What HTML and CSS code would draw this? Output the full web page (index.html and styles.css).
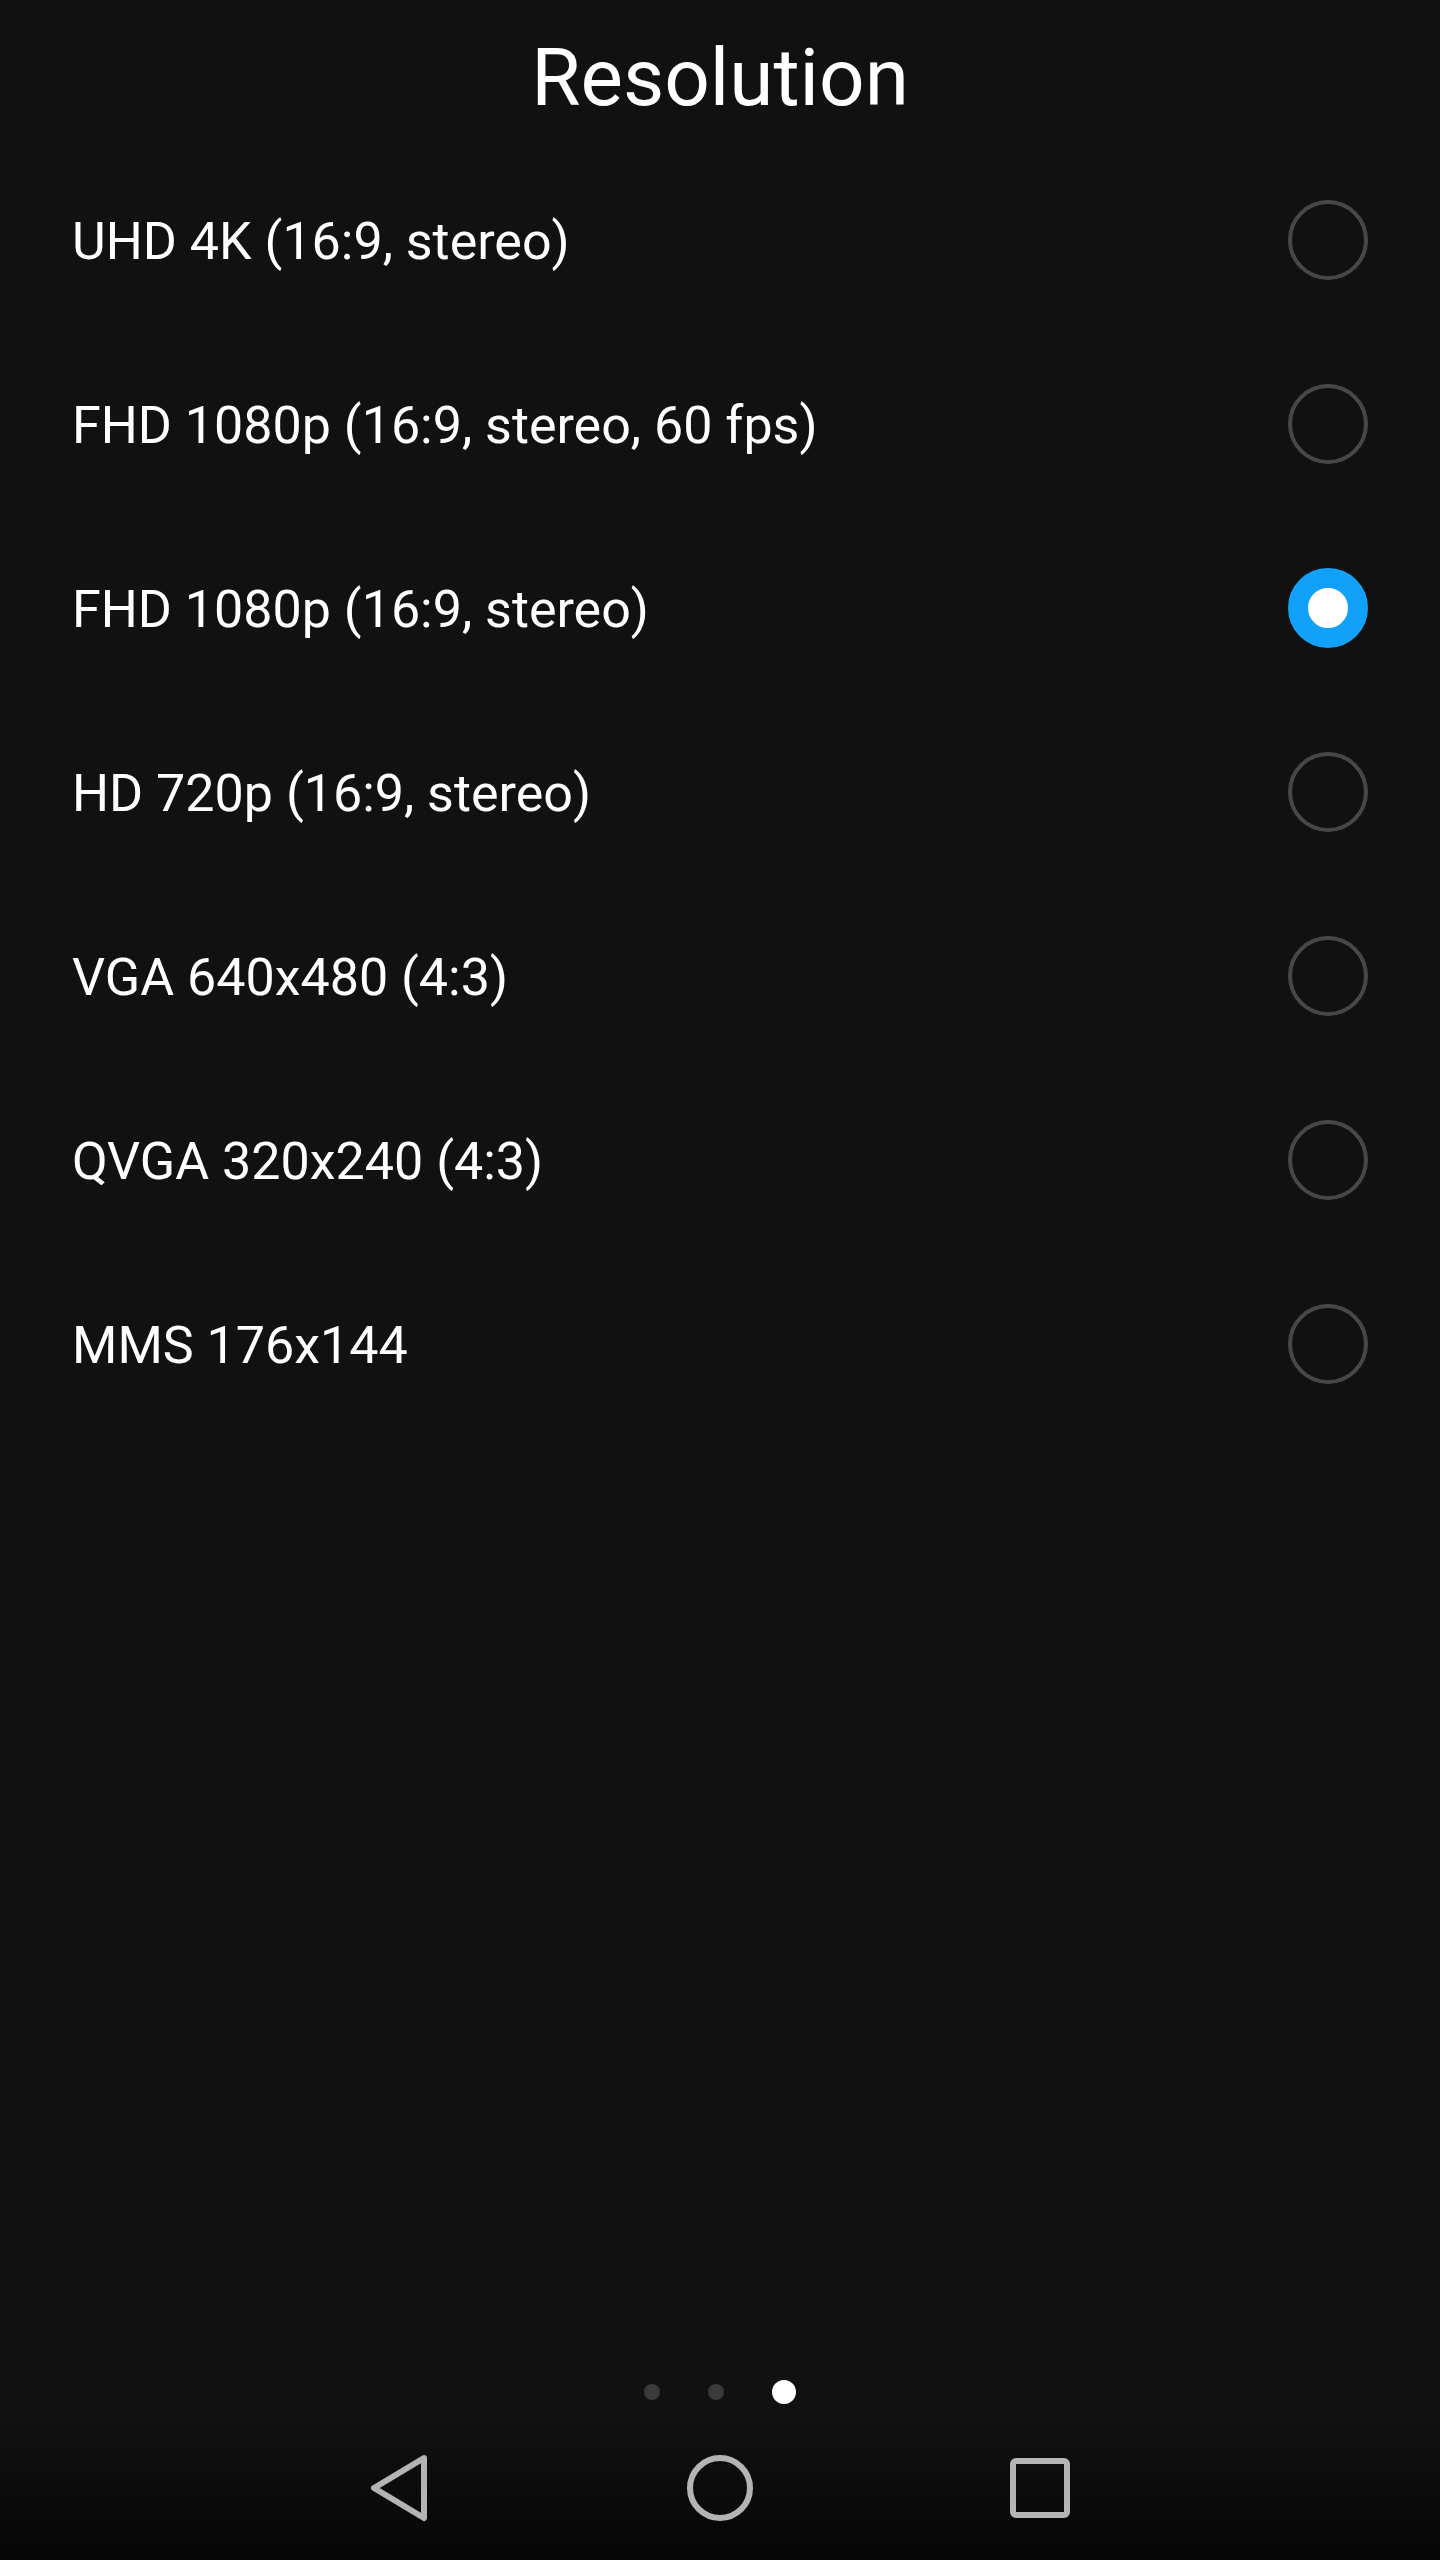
FILE: index.html
```html
<!DOCTYPE html>
<html lang="en">
<head>
    <meta charset="UTF-8">
    <meta name="viewport" content="width=device-width, initial-scale=1.0">
    <title>Resolution</title>
    <link rel="stylesheet" href="styles.css">
</head>
<body>
    <div class="screen">
        <h1 class="title">Resolution</h1>

        <ul class="options">
            <li class="option"><span class="label">UHD 4K (16:9, stereo)</span><span class="radio"></span></li>
            <li class="option"><span class="label">FHD 1080p (16:9, stereo, 60 fps)</span><span class="radio"></span></li>
            <li class="option"><span class="label">FHD 1080p (16:9, stereo)</span><span class="radio checked"></span></li>
            <li class="option"><span class="label">HD 720p (16:9, stereo)</span><span class="radio"></span></li>
            <li class="option"><span class="label">VGA 640x480 (4:3)</span><span class="radio"></span></li>
            <li class="option"><span class="label">QVGA 320x240 (4:3)</span><span class="radio"></span></li>
            <li class="option"><span class="label">MMS 176x144</span><span class="radio"></span></li>
        </ul>

        <div class="pager">
            <span class="dot"></span>
            <span class="dot"></span>
            <span class="dot active"></span>
        </div>

        <nav class="navbar">
            <span class="nav-btn">
                <svg viewBox="0 0 80 80" width="80" height="80">
                    <path d="M64 10 L14 40 L64 70 Z" fill="none" stroke="#b4b4b4" stroke-width="6" stroke-linejoin="round"/>
                </svg>
            </span>
            <span class="nav-btn">
                <svg viewBox="0 0 80 80" width="80" height="80">
                    <circle cx="40" cy="40" r="30" fill="none" stroke="#b4b4b4" stroke-width="6"/>
                </svg>
            </span>
            <span class="nav-btn">
                <svg viewBox="0 0 80 80" width="80" height="80">
                    <rect x="13" y="13" width="54" height="54" rx="3" fill="none" stroke="#b4b4b4" stroke-width="6"/>
                </svg>
            </span>
        </nav>
    </div>
</body>
</html>
```

FILE: styles.css
```css
* {
    box-sizing: border-box;
    margin: 0;
    padding: 0;
}

body {
    font-family: Roboto, "Noto Sans", sans-serif;
    color: #fff;
    background-color: #111111;
}

.screen {
    height: 2560px;
    display: flex;
    flex-direction: column;
}

.title {
    font-size: 80px;
    font-weight: 400;
    line-height: 80px;
    text-align: center;
    padding-top: 38px;
    margin-bottom: 30px;
}

.options {
    list-style: none;
    flex: 1;
}

.option {
    height: 184px;
    display: flex;
    align-items: center;
    justify-content: space-between;
    padding: 0 72px 0 72px;
}

.label {
    font-size: 52px;
    line-height: 60px;
    padding-top: 4px;
}

.radio {
    width: 80px;
    height: 80px;
    border-radius: 50%;
    border: 4px solid #474747;
}

.radio.checked {
    border: 20px solid #12a1f8;
    background-color: #fff;
}

.pager {
    height: 48px;
    display: flex;
    align-items: center;
    justify-content: center;
    gap: 48px;
}

.dot {
    width: 16px;
    height: 16px;
    border-radius: 50%;
    background-color: #3a3a3a;
}

.dot.active {
    width: 24px;
    height: 24px;
    background-color: #fff;
}

.navbar {
    height: 144px;
    display: flex;
    align-items: center;
    justify-content: center;
    gap: 240px;
    background: linear-gradient(#111111, #060606);
}

.nav-btn {
    width: 80px;
    height: 80px;
}

.nav-btn svg {
    display: block;
}
```
